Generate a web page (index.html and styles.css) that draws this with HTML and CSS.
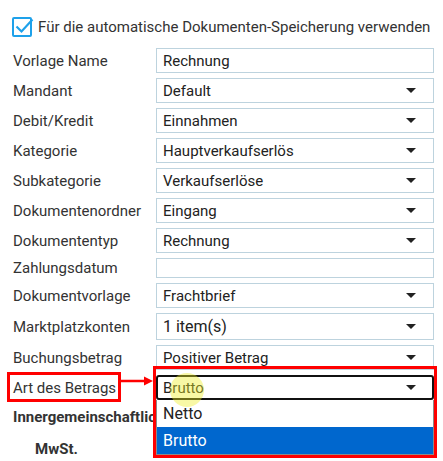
FILE: index.html
```html
<!DOCTYPE html>
<html lang="de">
<head>
<meta charset="utf-8">
<title>Vorlage</title>
<link rel="stylesheet" href="styles.css">
</head>
<body>
<div class="form">
  <div class="check-row">
    <svg class="checkbox" width="24" height="20" viewBox="0 0 24 20">
      <rect x="1" y="1" width="18" height="18" rx="1" fill="#fff" stroke="#1ea1ea" stroke-width="2"/>
      <path d="M4.5 9.5 L9.5 14.5 L20.5 2.5" fill="none" stroke="#1ea1ea" stroke-width="2.2"/>
    </svg>
    <span>Für die automatische Dokumenten-Speicherung verwenden</span>
  </div>

  <div class="grid">
    <div class="label">Vorlage Name</div>
    <div class="field">Rechnung</div>

    <div class="label">Mandant</div>
    <div class="field select">Default<i class="caret"></i></div>

    <div class="label">Debit/Kredit</div>
    <div class="field select">Einnahmen<i class="caret"></i></div>

    <div class="label">Kategorie</div>
    <div class="field select">Hauptverkaufserlös<i class="caret"></i></div>

    <div class="label">Subkategorie</div>
    <div class="field select">Verkaufserlöse<i class="caret"></i></div>

    <div class="label">Dokumentenordner</div>
    <div class="field select">Eingang<i class="caret"></i></div>

    <div class="label">Dokumententyp</div>
    <div class="field select">Rechnung<i class="caret"></i></div>

    <div class="label">Zahlungsdatum</div>
    <div class="field short"></div>

    <div class="label">Dokumentvorlage</div>
    <div class="field select">Frachtbrief<i class="caret"></i></div>

    <div class="label">Marktplatzkonten</div>
    <div class="field select tall">1 item(s)<i class="caret"></i></div>

    <div class="label">Buchungsbetrag</div>
    <div class="field select">Positiver Betrag<i class="caret"></i></div>

    <div class="label">Art des Betrags</div>
    <div class="open-wrap">
      <div class="field select active">Brutto<i class="caret"></i></div>
      <ul class="options">
        <li>Netto</li>
        <li class="selected">Brutto</li>
      </ul>
    </div>
  </div>

  <div class="section">Innergemeinschaftliche Lieferung</div>
  <div class="sub">MwSt.</div>
</div>

<div class="mark mark-label"></div>
<div class="mark mark-select"></div>
<svg class="arrow" width="34" height="12" viewBox="0 0 34 12">
  <line x1="0" y1="6" x2="25" y2="6" stroke="#f00" stroke-width="2.5"/>
  <polygon points="24,1.5 33,6 24,10.5" fill="#f00"/>
</svg>
<div class="cursor"></div>
</body>
</html>
```

FILE: styles.css
```css
* { box-sizing: border-box; }

body {
  margin: 0;
  background: #fff;
  font-family: Roboto, "Noto Sans", sans-serif;
  font-size: 15px;
  color: #333;
}

.form {
  padding: 16px 9px 0 12px;
}

.check-row {
  display: flex;
  align-items: center;
  gap: 2px;
  height: 21px;
  margin-bottom: 11px;
  color: #333;
}

.checkbox { display: block; flex: none; }

.grid {
  display: grid;
  grid-template-columns: 144px 278px;
  row-gap: 5px;
  align-items: center;
}

.label {
  padding-left: 1px;
  line-height: 18px;
}

.field {
  height: 25px;
  border: 1px solid #bdd3de;
  background: #fff;
  padding: 0 17px 0 6px;
  color: #222;
  display: flex;
  align-items: center;
  justify-content: space-between;
  line-height: 18px;
}

.field.short { height: 20px; }

.field.tall {
  height: 27px;
  font-size: 16px;
}

.caret {
  width: 0;
  height: 0;
  border-left: 5px solid transparent;
  border-right: 5px solid transparent;
  border-top: 5px solid #222;
}

.open-wrap {
  position: relative;
}

.field.active {
  border: 2px solid #111;
  border-radius: 3px;
  padding-left: 5px;
  padding-right: 16px;
}

.options {
  position: absolute;
  top: 25px;
  left: 0;
  right: 0;
  margin: 0;
  padding: 0;
  list-style: none;
  background: #fff;
  border: 1px solid #8a8a8a;
  border-top: none;
  z-index: 2;
}

.options li {
  height: 27px;
  line-height: 27px;
  padding-left: 6px;
  color: #222;
  font-size: 16px;
}

.options li.selected {
  height: 27px;
  background: #0067ce;
  color: #fff;
}

.section {
  margin-top: 7px;
  padding-left: 1px;
  width: 143px;
  overflow: hidden;
  line-height: 20px;
  font-weight: bold;
  color: #333;
  white-space: nowrap;
}

.sub {
  margin-top: 12px;
  padding-left: 23px;
  line-height: 20px;
  font-weight: bold;
  color: #333;
}

.mark {
  position: absolute;
  border: 3px solid #f00;
  z-index: 3;
}

.mark-label {
  left: 7px;
  top: 372px;
  width: 114px;
  height: 30px;
}

.mark-select {
  left: 153px;
  top: 366px;
  width: 284px;
  height: 92px;
}

.arrow {
  position: absolute;
  left: 120px;
  top: 375px;
  z-index: 3;
}

.cursor {
  position: absolute;
  left: 170px;
  top: 373px;
  width: 34px;
  height: 34px;
  border-radius: 50%;
  background: rgba(238, 238, 40, 0.42);
  z-index: 4;
}
```
